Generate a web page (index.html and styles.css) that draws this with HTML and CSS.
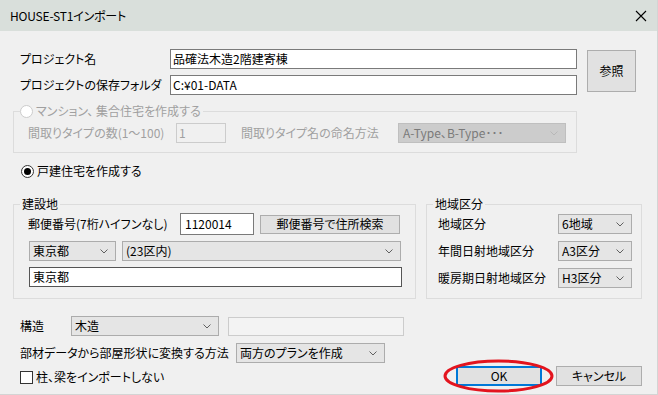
FILE: index.html
```html
<html>

<head>
  <link rel="stylesheet" href="styles.css">
</head>

<body>
  <div class="window">

    <div class="titlebar">
      <span class="title">HOUSE-ST1インポート</span>
      <svg class="close" width="12" height="12" viewBox="0 0 12 12">
        <path d="M1 1 L11 11 M11 1 L1 11" stroke="#000" stroke-width="1.1" fill="none"/>
      </svg>
    </div>

    <div class="content">

      <div class="project">
        <div class="project-fields">
          <div class="field-row">
            <span class="field-label">プロジェクト名</span>
            <div class="textbox project-box">品確法木造2階建寄棟</div>
          </div>
          <div class="field-row">
            <span class="field-label">プロジェクトの保存フォルダ</span>
            <div class="textbox project-box">C:¥01-DATA</div>
          </div>
        </div>
        <div class="btn browse">参照</div>
      </div>

      <fieldset class="group group-mansion is-disabled">
        <legend><span class="radio"></span>マンション、 集合住宅を作成する</legend>
        <div class="group-row">
          <span class="mansion-label">間取りタイプの数(1〜100)</span>
          <div class="textbox textbox-disabled type-count">1</div>
          <span class="mansion-label mansion-label-2">間取りタイプ名の命名方法</span>
          <div class="combo combo-disabled type-name">
            <span>A-Type、B-Type･･･</span>
            <svg class="chevron" width="8" height="5" viewBox="0 0 8 5"><path d="M0.5 0.5 L4 4 L7.5 0.5" stroke="#b8b8b8" fill="none"/></svg>
          </div>
        </div>
      </fieldset>

      <div class="radio-row">
        <span class="radio radio-on"></span>戸建住宅を作成する
      </div>

      <div class="groups">
        <fieldset class="group group-site">
          <legend>建設地</legend>
          <div class="site-row site-row-zip">
            <span class="zip-label">郵便番号(7桁ハイフンなし)</span>
            <div class="textbox zip-box">1120014</div>
            <div class="btn zip-search">郵便番号で住所検索</div>
          </div>
          <div class="site-row">
            <div class="combo pref">
              <span>東京都</span>
              <svg class="chevron" width="8" height="5" viewBox="0 0 8 5"><path d="M0.5 0.5 L4 4 L7.5 0.5" stroke="#606060" fill="none"/></svg>
            </div>
            <div class="combo city">
              <span>(23区内)</span>
              <svg class="chevron" width="8" height="5" viewBox="0 0 8 5"><path d="M0.5 0.5 L4 4 L7.5 0.5" stroke="#606060" fill="none"/></svg>
            </div>
          </div>
          <div class="site-row">
            <div class="textbox address">東京都</div>
          </div>
        </fieldset>

        <fieldset class="group group-area">
          <legend>地域区分</legend>
          <div class="area-row">
            <span class="area-label">地域区分</span>
            <div class="combo area-combo">
              <span>6地域</span>
              <svg class="chevron" width="8" height="5" viewBox="0 0 8 5"><path d="M0.5 0.5 L4 4 L7.5 0.5" stroke="#606060" fill="none"/></svg>
            </div>
          </div>
          <div class="area-row">
            <span class="area-label">年間日射地域区分</span>
            <div class="combo area-combo">
              <span>A3区分</span>
              <svg class="chevron" width="8" height="5" viewBox="0 0 8 5"><path d="M0.5 0.5 L4 4 L7.5 0.5" stroke="#606060" fill="none"/></svg>
            </div>
          </div>
          <div class="area-row">
            <span class="area-label">暖房期日射地域区分</span>
            <div class="combo area-combo">
              <span>H3区分</span>
              <svg class="chevron" width="8" height="5" viewBox="0 0 8 5"><path d="M0.5 0.5 L4 4 L7.5 0.5" stroke="#606060" fill="none"/></svg>
            </div>
          </div>
        </fieldset>
      </div>

      <div class="bottom">
        <div class="bottom-row">
          <span class="structure-label">構造</span>
          <div class="combo structure">
            <span>木造</span>
            <svg class="chevron" width="8" height="5" viewBox="0 0 8 5"><path d="M0.5 0.5 L4 4 L7.5 0.5" stroke="#606060" fill="none"/></svg>
          </div>
          <div class="textbox textbox-disabled structure-extra"></div>
        </div>
        <div class="bottom-row">
          <span class="method-label">部材データから部屋形状に変換する方法</span>
          <div class="combo method">
            <span>両方のプランを作成</span>
            <svg class="chevron" width="8" height="5" viewBox="0 0 8 5"><path d="M0.5 0.5 L4 4 L7.5 0.5" stroke="#606060" fill="none"/></svg>
          </div>
        </div>
        <div class="bottom-row action-row">
          <div class="check-row">
            <span class="checkbox"></span>柱、梁をインポートしない
          </div>
          <div class="actions">
            <div class="ok-wrap">
              <div class="btn btn-default">OK</div>
              <svg class="highlight" width="111" height="34" viewBox="0 0 111 34">
                <ellipse cx="55.5" cy="17" rx="53.5" ry="15" stroke="#e3141e" stroke-width="3" fill="none"/>
              </svg>
            </div>
            <div class="btn">キャンセル</div>
          </div>
        </div>
      </div>

    </div>
  </div>
</body>

</html>
```

FILE: styles.css
```css
* {
  margin: 0;
  padding: 0;
  box-sizing: border-box;
}

body {
  font-family: "Noto Sans CJK JP", "Noto Sans", sans-serif;
  font-size: 12px;
  line-height: 14px;
  color: #000;
  font-feature-settings: "palt";
  background: #f0f0f0;
}

.window {
  width: 658px;
  height: 395px;
  background: #f0f0f0;
  border-right: 1px solid #d4d4d4;
  border-bottom: 1px solid #d4d4d4;
  overflow: hidden;
}

.titlebar {
  height: 31px;
  background: #d9dfdb;
  display: flex;
  align-items: center;
  justify-content: space-between;
  padding: 0 10px 0 10px;
}

.title {
  font-size: 12px;
  letter-spacing: -0.2px;
}

.close {
  display: block;
}

.content {
  padding: 0 0 0 13px;
}

/* controls */

.textbox {
  height: 20px;
  background: #fff;
  border: 1px solid #7a7a7a;
  padding: 2px 0 0 2px;
  white-space: nowrap;
  overflow: hidden;
}

.textbox-disabled {
  background: #f0f0f0;
  border-color: #cccccc;
  color: #a0a0a0;
}

.combo {
  height: 20px;
  display: flex;
  align-items: center;
  justify-content: space-between;
  background: #e5e5e5;
  border: 1px solid #acacac;
  padding: 0 7px 0 3px;
  white-space: nowrap;
}

.combo-disabled {
  background: #cccccc;
  border-color: #bfbfbf;
  color: #7a7a7a;
}

.chevron {
  flex-shrink: 0;
  display: block;
}

.btn {
  height: 20px;
  display: flex;
  align-items: center;
  justify-content: center;
  background: #e1e1e1;
  border: 1px solid #adadad;
  white-space: nowrap;
}

.btn-default {
  border: 2px solid #0078d7;
}

.radio {
  display: inline-block;
  width: 13px;
  height: 13px;
  border-radius: 50%;
  border: 1px solid #cccccc;
  background: #fff;
  margin-right: 3px;
  vertical-align: -2px;
  position: relative;
}

.radio-on {
  border-color: #333;
}

.radio-on::after {
  content: "";
  position: absolute;
  left: 2px;
  top: 2px;
  width: 7px;
  height: 7px;
  border-radius: 50%;
  background: #000;
}

.checkbox {
  display: inline-block;
  width: 13px;
  height: 13px;
  border: 1px solid #333;
  background: #fff;
  margin-right: 3px;
}

/* project */

.project {
  display: flex;
  margin: 18px 0 0 7px;
}

.project-fields {
  display: flex;
  flex-direction: column;
  gap: 6px;
}

.field-row {
  display: flex;
  align-items: center;
}

.field-label {
  width: 150px;
}

.project-box {
  width: 407px;
}

.browse {
  width: 49px;
  height: 42px;
  margin: 1px 0 0 10px;
}

/* groups */

.group {
  border: 1px solid #dcdcdc;
  min-width: 0;
}

.group legend {
  line-height: 14px;
  padding: 0 2px;
}

.group-mansion {
  width: 564px;
  margin-top: 9px;
  padding: 5px 0 9px 14px;
}

.group-mansion legend {
  margin-left: -8px;
  padding: 0 2px 0 0;
  color: #a0a0a0;
}

.group-row {
  display: flex;
  align-items: center;
}

.mansion-label {
  width: 148px;
  color: #a0a0a0;
}

.type-count {
  width: 50px;
}

.mansion-label-2 {
  width: 157px;
  margin-left: 15px;
}

.type-name {
  width: 168px;
  height: 20px;
  padding-left: 4px;
}

.radio-row {
  display: flex;
  align-items: center;
  height: 14px;
  margin: 11px 0 0 8px;
}

.radio-row .radio {
  vertical-align: 0;
}

.groups {
  display: flex;
  margin-top: 19px;
}

.group-site {
  width: 403px;
  padding: 2px 0 11px 15px;
}

.group-site legend {
  margin-left: -9px;
}

.site-row {
  display: flex;
  align-items: center;
  margin-top: 6px;
}

.site-row-zip {
  margin-top: 0;
  height: 22px;
}

.zip-label {
  width: 152px;
  margin-left: -1px;
}

.zip-box {
  width: 74px;
  height: 22px;
  padding-top: 3px;
  padding-left: 4px;
}

.zip-search {
  width: 140px;
  height: 19px;
  margin-left: 6px;
}

.pref {
  width: 87px;
}

.city {
  width: 279px;
  margin-left: 6px;
}

.address {
  width: 373px;
  border-color: #555;
  padding-left: 3px;
}

.group-area {
  width: 216px;
  margin-left: 10px;
  padding: 3px 0 10px 11px;
}

.group-area legend {
  margin-left: -5px;
}

.area-row {
  display: flex;
  align-items: center;
  margin-top: 7px;
}

.area-row:first-of-type {
  margin-top: 0;
}

.area-label {
  width: 120px;
}

.area-combo {
  width: 74px;
}

/* bottom */

.bottom {
  padding: 17px 15px 0 7px;
}

.bottom-row {
  display: flex;
  align-items: center;
  margin-top: 7px;
}

.bottom-row:first-child {
  margin-top: 0;
}

.structure-label {
  width: 51px;
}

.structure {
  width: 148px;
}

.structure-extra {
  width: 176px;
  height: 19px;
  margin-left: 9px;
  background: #f3f3f3;
}

.method-label {
  width: 216px;
}

.method {
  width: 149px;
}

.action-row {
  margin-top: 3px;
  justify-content: space-between;
}

.check-row {
  display: flex;
  align-items: center;
  margin-top: 2px;
}

.actions {
  display: flex;
  gap: 14px;
}

.actions .btn {
  width: 86px;
}

.ok-wrap {
  position: relative;
}

.highlight {
  position: absolute;
  left: -13px;
  top: -7px;
  pointer-events: none;
}
```
